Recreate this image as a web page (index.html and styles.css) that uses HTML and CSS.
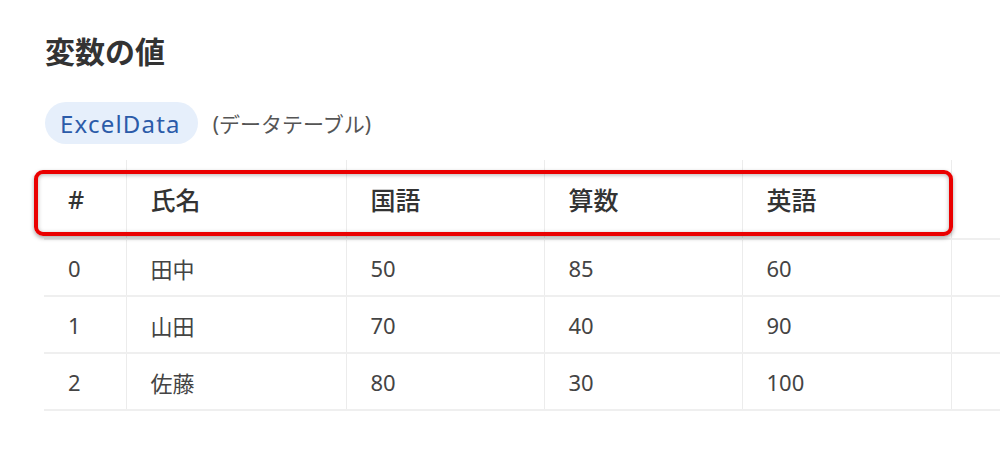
FILE: index.html
```html
<!DOCTYPE html>
<html lang="ja">
<head>
<meta charset="utf-8">
<link rel="stylesheet" href="styles.css">
</head>
<body>
<div class="page">
  <h1 class="title">変数の値</h1>
  <div class="typeline">
    <span class="badge">ExcelData</span>
    <span class="type">(データテーブル)</span>
  </div>
  <div class="tablewrap">
    <table class="grid">
      <colgroup>
        <col class="c0"><col class="c1"><col class="c2"><col class="c3"><col class="c4"><col class="c5">
      </colgroup>
      <thead>
        <tr><th>#</th><th>氏名</th><th>国語</th><th>算数</th><th>英語</th><th></th></tr>
      </thead>
      <tbody>
        <tr><td>0</td><td>田中</td><td>50</td><td>85</td><td>60</td><td></td></tr>
        <tr><td>1</td><td>山田</td><td>70</td><td>40</td><td>90</td><td></td></tr>
        <tr><td>2</td><td>佐藤</td><td>80</td><td>30</td><td>100</td><td></td></tr>
      </tbody>
    </table>
    <div class="highlight"></div>
  </div>
</div>
</body>
</html>
```
FILE: styles.css
```css
html, body {
  margin: 0;
  padding: 0;
  background: #ffffff;
}
body {
  font-family: "Noto Sans", "Noto Sans CJK JP", sans-serif;
  color: #333333;
  overflow: hidden;
}
.page {
  padding: 30px 0 0 44px;
}
.title {
  margin: 0 0 0 1px;
  font-size: 30px;
  line-height: 40px;
  font-weight: 600;
  color: #333333;
  font-family: "Noto Sans CJK JP", sans-serif;
}
.typeline {
  margin-top: 32px;
  display: flex;
  align-items: center;
  gap: 15px;
  height: 42px;
}
.badge {
  display: inline-flex;
  align-items: center;
  height: 42px;
  margin-left: 1px;
  padding: 0 17px 0 15px;
  border-radius: 21px;
  background: #e6effb;
  color: #2b5ba9;
  font-size: 24px;
  letter-spacing: 1.2px;
}
.type {
  font-size: 21px;
  color: #555555;
  font-family: "Noto Sans", "Noto Sans CJK JP", sans-serif;
}
.tablewrap {
  position: relative;
  margin-top: 16px;
}
.grid {
  border-collapse: collapse;
  table-layout: fixed;
  width: 956px;
}
.c0 { width: 82px; }
.c1 { width: 220px; }
.c2 { width: 198px; }
.c3 { width: 198px; }
.c4 { width: 209px; }
.c5 { width: 49px; }
.grid th, .grid td {
  text-align: left;
  padding: 0 0 0 24px;
  border-left: 1px solid #ececec;
  border-bottom: 2px solid #efefef;
  vertical-align: middle;
}
.grid th:first-child, .grid td:first-child {
  border-left: none;
}
.grid th {
  height: 78px;
  font-size: 25px;
  font-weight: 500;
  color: #333333;
}
.grid td {
  height: 55px;
  font-size: 22px;
  font-weight: 400;
  color: #444444;
}
.highlight {
  position: absolute;
  left: -10px;
  top: 10px;
  width: 911px;
  height: 58px;
  border: 4px solid #ea0000;
  border-radius: 9px;
  box-shadow: 0 2px 4px rgba(0,0,0,0.35), inset 0 1px 4px rgba(0,0,0,0.3);
  pointer-events: none;
}
```
